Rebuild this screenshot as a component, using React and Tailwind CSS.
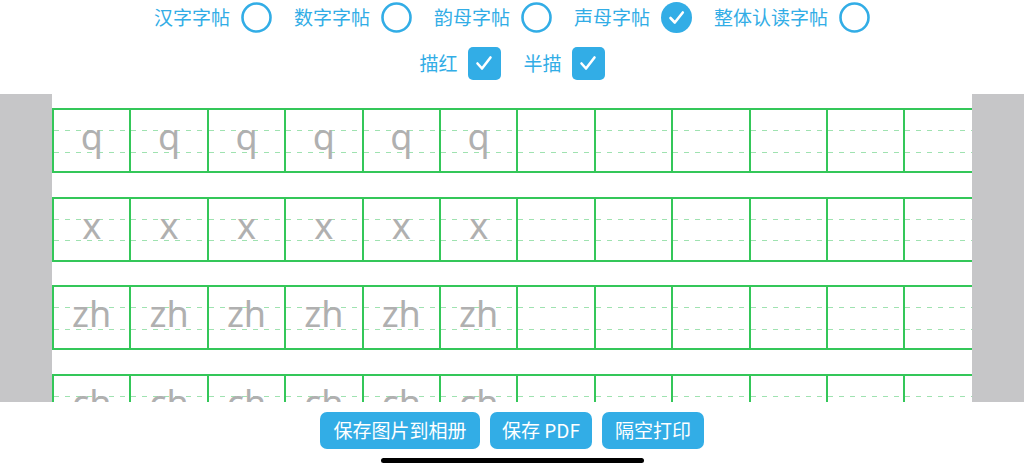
import { Fragment } from "react";

const BLUE = "#32ade6";

const tabs = [
  { label: "汉字字帖", checked: false },
  { label: "数字字帖", checked: false },
  { label: "韵母字帖", checked: false },
  { label: "声母字帖", checked: true },
  { label: "整体认读字帖", checked: false },
];

const rows = ["q", "x", "zh", "ch"];

function Radio({ checked }) {
  return (
    <svg width="31" height="31" viewBox="0 0 31 31">
      {checked ? (
        <>
          <circle cx="15.5" cy="15.5" r="15.5" fill={BLUE} />
          <path d="M9.5 16 L13.8 20.5 L21.8 10.5" fill="none" stroke="#fff" strokeWidth="2.6" strokeLinecap="round" strokeLinejoin="round" />
        </>
      ) : (
        <circle cx="15.5" cy="15.5" r="14" fill="none" stroke={BLUE} strokeWidth="2.6" />
      )}
    </svg>
  );
}

function Checkbox() {
  return (
    <div className="w-[33px] h-[33px] rounded-[5px] bg-[#32ade6] flex items-center justify-center">
      <svg width="22" height="22" viewBox="0 0 22 22">
        <path d="M4.5 11.5 L9 16.5 L17.5 5.5" fill="none" stroke="#fff" strokeWidth="2.6" strokeLinecap="round" strokeLinejoin="round" />
      </svg>
    </div>
  );
}

function Cell({ letter }) {
  return (
    <div className="relative w-[77.4px] shrink-0 border-r-2 border-[#34c759] flex items-center justify-center">
      <div className="absolute left-0 right-0 top-[20px] h-px bg-[repeating-linear-gradient(90deg,#9fe2b0_0_5px,transparent_5px_11px)]" />
      <div className="absolute left-0 right-0 top-[41.5px] h-px bg-[repeating-linear-gradient(90deg,#9fe2b0_0_5px,transparent_5px_11px)]" />
      {letter && (
        <span className="relative text-[36px] leading-none text-[#b0b0b0] -mt-[7px]" style={{ fontFamily: '"Noto Sans", sans-serif' }}>
          {letter}
        </span>
      )}
    </div>
  );
}

export default function App() {
  return (
    <div className="w-[1024px] h-[473px] bg-white flex flex-col overflow-hidden" style={{ fontFamily: '"Noto Sans CJK SC", "Noto Sans", sans-serif' }}>
      <div className="h-[94px] flex flex-col items-center">
        <div className="h-[34px] flex items-center gap-[22px] text-[19px] text-[#32ade6]">
          {tabs.map((t) => (
            <div key={t.label} className="flex items-center gap-[11px]">
              <span>{t.label}</span>
              <Radio checked={t.checked} />
            </div>
          ))}
        </div>
        <div className="mt-[12px] h-[34px] flex items-center gap-[23px] text-[19px] text-[#32ade6]">
          <div className="flex items-center gap-[10px]">
            <span>描红</span>
            <Checkbox />
          </div>
          <div className="flex items-center gap-[10px]">
            <span>半描</span>
            <Checkbox />
          </div>
        </div>
      </div>

      <div className="h-[308px] flex">
        <div className="w-[52px] bg-[#c6c6c8]" />
        <div className="flex-1 overflow-hidden pt-[14px] flex flex-col gap-[23.7px]">
          {rows.map((r) => (
            <div key={r} className="h-[65px] shrink-0 flex border-y-2 border-l-2 border-[#34c759] w-max">
              {Array.from({ length: 12 }).map((_, i) => (
                <Fragment key={i}>
                  <Cell letter={i < 6 ? r : null} />
                </Fragment>
              ))}
            </div>
          ))}
        </div>
        <div className="w-[52px] bg-[#c6c6c8]" />
      </div>

      <div className="flex-1 flex flex-col items-center">
        <div className="mt-[10px] flex gap-[10px] text-[19px] text-white">
          <button className="h-[37px] w-[160px] rounded-[7px] bg-[#32ade6]">保存图片到相册</button>
          <button className="h-[37px] w-[102px] rounded-[7px] bg-[#32ade6]">保存 PDF</button>
          <button className="h-[37px] w-[102px] rounded-[7px] bg-[#32ade6]">隔空打印</button>
        </div>
        <div className="mt-[9px] w-[263px] h-[5px] rounded-full bg-black" />
      </div>
    </div>
  );
}
